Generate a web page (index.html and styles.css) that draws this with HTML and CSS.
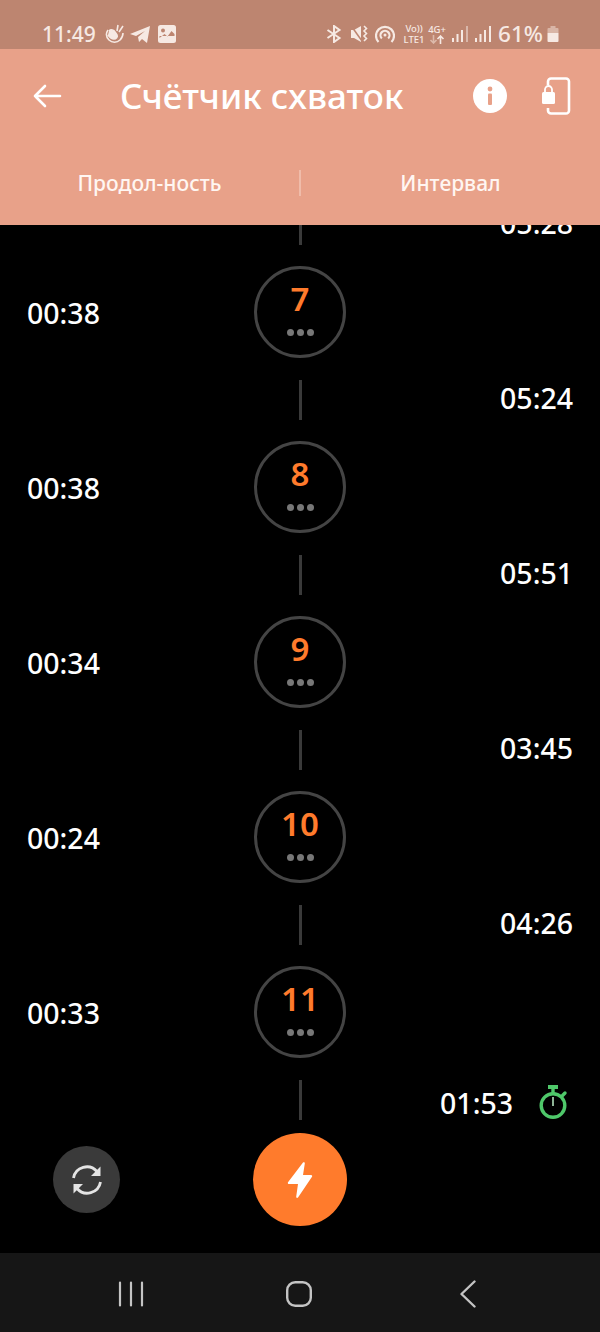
FILE: index.html
```html
<!DOCTYPE html>
<html>
  <head>
    <meta charset="utf-8">
    <title>Счётчик схваток</title>
    <link rel="stylesheet" href="styles.css">
  </head>
  <body>
    <div class="screen">
      <div class="status-bar">
        <div class="status-left">
          <span class="clock">11:49</span>
          <svg class="st-icon" width="20" height="20" viewBox="0 0 20 20" fill="none" stroke="#f6e9e3" stroke-width="1.6">
            <path d="M3 6c-2 3-2 7 1 10s8 3 11 0 3-5 3-7"/>
            <path d="M4 7c2-2 5-1 6 1l2 3c1 2-1 4-3 4s-5-2-6-4" fill="#f6e9e3"/>
            <path d="M12 7l1-6M14 8l4-6"/>
          </svg>
          <svg class="st-icon" width="20" height="20" viewBox="0 0 20 20" fill="#f6e9e3">
            <path d="M0 10L20 2l-3 17-5-4-3 3-1-5 7-6-9 5z"/>
          </svg>
          <svg class="st-icon pic" width="18" height="18" viewBox="0 0 18 18">
            <rect x="0" y="0" width="18" height="18" rx="2.500" fill="#f6e9e3"/>
            <circle cx="5" cy="5.500" r="2" fill="#bd8570"/>
            <path d="M1.500 13l5-4 3 2.500 4-5.500 3 3v2H1.500z" fill="#bd8570"/>
          </svg>
        </div>
        <div class="status-right">
          <svg width="16" height="18" viewBox="0 0 16 18" fill="none" stroke="#f6e9e3" stroke-width="2">
            <path d="M1.500 5l12 8L8 17V1l5.500 4-12 8"/>
          </svg>
          <svg class="gap-9" width="17" height="18" viewBox="0 0 17 18" fill="#f6e9e3">
            <path d="M0 5h3l7-4v16l-7-4H0z"/>
            <path d="M13 1l2.500 2.500L13 6l2.500 2.500L13 11l2.500 2.500L13 16" fill="none" stroke="#f6e9e3" stroke-width="1.600"/>
            <path d="M1 2l10 14" stroke="#bd8570" stroke-width="1.500"/>
          </svg>
          <svg class="gap-7" width="20" height="19" viewBox="0 0 20 19" fill="none" stroke="#f6e9e3" stroke-width="2.200">
            <path d="M3.500 18a9 9 0 1 1 13 0"/>
            <path d="M6.800 14.500a4.500 4.500 0 1 1 6.400 0"/>
            <circle cx="10" cy="11" r="1.500" fill="#f6e9e3" stroke="none"/>
          </svg>
          <div class="net-tag net-vo gap-9"><span>Vo))</span><span>LTE1</span></div>
          <div class="net-tag net-g">
            <span>4G+</span>
            <svg width="16" height="9" viewBox="0 0 16 9" fill="none" stroke-width="1.600">
              <path d="M4.500 0v8M1.500 5l3 3 3-3" stroke="#dcb9aa"/>
              <path d="M11.500 9V1M8.500 4l3-3 3 3" stroke="#f6e9e3"/>
            </svg>
          </div>
          <svg class="gap-6" width="16" height="16" viewBox="0 0 16 16" fill="#f6e9e3">
            <rect x="0" y="12" width="2" height="4"/>
            <rect x="4.500" y="8" width="2" height="8"/>
            <rect x="9" y="4" width="2" height="12"/>
            <rect x="14" y="0" width="2" height="16" opacity=".5"/>
          </svg>
          <svg class="gap-7" width="16" height="16" viewBox="0 0 16 16" fill="#f6e9e3">
            <rect x="0" y="12" width="2" height="4"/>
            <rect x="4.500" y="8" width="2" height="8"/>
            <rect x="9" y="4" width="2" height="12"/>
            <rect x="14" y="0" width="2" height="16"/>
          </svg>
          <span class="battery-text">61%</span>
          <svg width="12" height="16" viewBox="0 0 12 16">
            <path d="M3.500 0h5v2h2a1 1 0 0 1 1 1v4H.5V3a1 1 0 0 1 1-1h2z" fill="#d9b5a6"/>
            <path d="M.5 7h11v8a1 1 0 0 1-1 1h-9a1 1 0 0 1-1-1z" fill="#f6e9e3"/>
          </svg>
        </div>
      </div>

      <header class="app-bar">
        <div class="toolbar">
          <svg class="back" width="30" height="26" viewBox="0 0 30 26" fill="none" stroke="#fff" stroke-width="2.600" stroke-linecap="round" stroke-linejoin="round">
            <path d="M28 13H3M13 3L3 13l10 10"/>
          </svg>
          <h1 class="title">Счётчик схваток</h1>
          <svg class="info" width="34" height="34" viewBox="0 0 34 34">
            <circle cx="17" cy="17" r="17" fill="#fff"/>
            <circle cx="17" cy="10" r="2.400" fill="#e8a189"/>
            <rect x="15" y="14.500" width="4" height="11.500" rx="1" fill="#e8a189"/>
          </svg>
          <svg class="lock" width="30" height="38" viewBox="0 0 30 38" fill="none">
            <path d="M7 8V4.500A3 3 0 0 1 10 1.500h15a3 3 0 0 1 3 3v29a3 3 0 0 1-3 3H10a3 3 0 0 1-3-3V31" stroke="#fff" stroke-width="2.600"/>
            <rect x="1" y="15" width="13" height="12" rx="1.500" fill="#fff"/>
            <path d="M4 15v-2.500a3.500 3.500 0 0 1 7 0V15" stroke="#fff" stroke-width="1.800"/>
          </svg>
        </div>
        <div class="tabs">
          <span class="tab">Продол-ность</span>
          <span class="tab-sep"></span>
          <span class="tab">Интервал</span>
        </div>
      </header>

      <main class="timeline">
        <div class="gap-row"><span class="line"></span><span class="interval">05:28</span></div>

        <div class="item"><span class="duration">00:38</span><div class="circle"><b>7</b><i class="dots"><u></u><u></u><u></u></i></div></div>
        <div class="gap-row"><span class="line"></span><span class="interval">05:24</span></div>

        <div class="item"><span class="duration">00:38</span><div class="circle"><b>8</b><i class="dots"><u></u><u></u><u></u></i></div></div>
        <div class="gap-row"><span class="line"></span><span class="interval">05:51</span></div>

        <div class="item"><span class="duration">00:34</span><div class="circle"><b>9</b><i class="dots"><u></u><u></u><u></u></i></div></div>
        <div class="gap-row"><span class="line"></span><span class="interval">03:45</span></div>

        <div class="item"><span class="duration">00:24</span><div class="circle"><b>10</b><i class="dots"><u></u><u></u><u></u></i></div></div>
        <div class="gap-row"><span class="line"></span><span class="interval">04:26</span></div>

        <div class="item"><span class="duration">00:33</span><div class="circle"><b>11</b><i class="dots"><u></u><u></u><u></u></i></div></div>
        <div class="gap-row">
          <span class="line"></span>
          <div class="running">
            <span class="interval">01:53</span>
            <svg width="30" height="36" viewBox="0 0 30 36" fill="none" stroke="#4fc86a" stroke-width="3.400">
              <circle cx="15" cy="20.500" r="11.800"/>
              <path d="M15 12v9" stroke="#9fc9a8" stroke-width="1.800"/>
              <path d="M10 2h10" stroke-width="4"/>
              <path d="M15 3v5"/>
              <path d="M24.500 10.500l2.500-2.500" stroke-linecap="round"/>
            </svg>
          </div>
        </div>

        <button class="reset">
          <svg width="32" height="32" viewBox="0 0 32 32" fill="none" stroke="#e4e4e4" stroke-width="2.800">
            <path d="M2.500 14A13.500 13.500 0 0 1 26 7.500"/>
            <path d="M29.500 18A13.500 13.500 0 0 1 6 24.500"/>
            <path d="M29.500 2.500v9.500h-9.500z" fill="#e4e4e4" stroke="none"/>
            <path d="M2.500 29.500V20h9.500z" fill="#e4e4e4" stroke="none"/>
          </svg>
        </button>
        <button class="start">
          <svg width="26" height="38" viewBox="0 0 26 38">
            <path d="M16 1.500c.8-.8 2-.2 1.800 1L16 14h8c1 0 1.500 1 1 1.800L11 36.500c-.7.900-2 .4-1.800-.7L11 23H2c-1 0-1.500-1-1-1.800z" fill="#fff"/>
          </svg>
        </button>
      </main>

      <nav class="nav-bar">
        <svg width="26" height="26" viewBox="0 0 26 26" stroke="#c4c4c4" stroke-width="2.200" stroke-linecap="round">
          <path d="M2 1.500v23M13 1.500v23M24 1.500v23"/>
        </svg>
        <svg class="nav-home" width="26" height="26" viewBox="0 0 26 26" fill="none" stroke="#c4c4c4" stroke-width="2.400">
          <rect x="1.200" y="1.200" width="23.600" height="23.600" rx="8"/>
        </svg>
        <svg width="16" height="28" viewBox="0 0 16 28" fill="none" stroke="#c4c4c4" stroke-width="2.400" stroke-linecap="round" stroke-linejoin="round">
          <path d="M14.500 1.500L1.500 14l13 12.500"/>
        </svg>
      </nav>
    </div>
  </body>
</html>
```

FILE: styles.css
```css
* {
  box-sizing: border-box;
}
body {
  margin: 0;
  background: #000;
  font-family: "Noto Sans", sans-serif;
}
.screen {
  width: 600px;
  height: 1332px;
  display: flex;
  flex-direction: column;
  overflow: hidden;
}

/* status bar */
.status-bar {
  height: 49px;
  flex: none;
  background: #bd8570;
  color: #f6e9e3;
  display: flex;
  justify-content: space-between;
  align-items: center;
  padding: 21px 41px 3px 42px;
}
.status-left,
.status-right {
  display: flex;
  align-items: center;
}
.clock {
  font-size: 21px;
  font-weight: 500;
  margin-right: 9px;
}
.st-icon {
  margin-right: 5px;
}
.pic {
  margin-left: 3px;
}
.gap-6 {
  margin-left: 6px;
}
.gap-7 {
  margin-left: 7px;
}
.gap-9 {
  margin-left: 9px;
}
.net-tag {
  display: flex;
  flex-direction: column;
  align-items: center;
  font-size: 9.500px;
  line-height: 11px;
  font-weight: 500;
  white-space: nowrap;
}
.net-vo {
  width: 20px;
}
.net-g {
  width: 18px;
  margin-left: 4px;
}
.battery-text {
  font-size: 22.500px;
  font-weight: 500;
  margin: 0 4px 0 7px;
}

/* app bar */
.app-bar {
  height: 176px;
  flex: none;
  background: #e8a189;
  color: #fff;
}
.toolbar {
  height: 94px;
  display: flex;
  align-items: center;
  padding: 0 29px 0 32px;
}
.title {
  flex: 1;
  margin: 0 0 2px;
  padding-left: 58px;
  font-size: 35px;
  font-weight: 500;
  white-space: nowrap;
}
.lock {
  margin-left: 34px;
}
.tabs {
  height: 82px;
  display: flex;
  align-items: center;
  padding-bottom: 2px;
}
.tab {
  flex: 1;
  text-align: center;
  font-size: 21px;
  font-weight: 500;
  color: #fff6f2;
}
.tab-sep {
  width: 2px;
  height: 26px;
  background: #f0bcaa;
}

/* timeline */
.timeline {
  flex: 1;
  position: relative;
  overflow: hidden;
  color: #fff;
}
.gap-row {
  height: 83px;
  position: relative;
  display: flex;
  justify-content: flex-end;
  align-items: center;
  padding: 0 27px 4px 0;
}
.gap-row:first-child {
  margin-top: -42px;
}
.line {
  position: absolute;
  left: 299px;
  top: 22px;
  width: 3px;
  height: 40px;
  background: #3a3a3a;
}
.interval,
.duration {
  font-size: 28.500px;
  font-weight: 500;
}
.item {
  height: 92px;
  position: relative;
  display: flex;
  align-items: center;
  justify-content: center;
}
.duration {
  position: absolute;
  left: 27px;
  top: 28px;
}
.circle {
  width: 92px;
  height: 92px;
  border: 3px solid #444;
  border-radius: 50%;
  display: flex;
  flex-direction: column;
  align-items: center;
  color: #ff7b2c;
}
.circle b {
  font-size: 33px;
  font-weight: 600;
  line-height: 40px;
  margin-top: 10px;
}
.dots {
  display: flex;
  gap: 3px;
  margin-top: 10px;
}
.dots u {
  width: 7px;
  height: 7px;
  border-radius: 50%;
  background: #777;
}
.running {
  display: flex;
  align-items: center;
  gap: 25px;
  margin: 11px 5px 0 0;
}
.reset,
.start {
  position: absolute;
  border: none;
  border-radius: 50%;
  padding: 0;
  display: flex;
  align-items: center;
  justify-content: center;
}
.reset {
  left: 53px;
  top: 921px;
  width: 67px;
  height: 67px;
  background: #3a3a3a;
}
.start {
  left: 253px;
  top: 908px;
  width: 94px;
  height: 93px;
  background: #ff7b2c;
}

/* bottom nav */
.nav-bar {
  height: 79px;
  flex: none;
  background: #161616;
  display: flex;
  align-items: center;
  justify-content: space-between;
  padding: 3px 124px 0 118px;
}
.nav-home {
  margin-right: 6px;
}
```
